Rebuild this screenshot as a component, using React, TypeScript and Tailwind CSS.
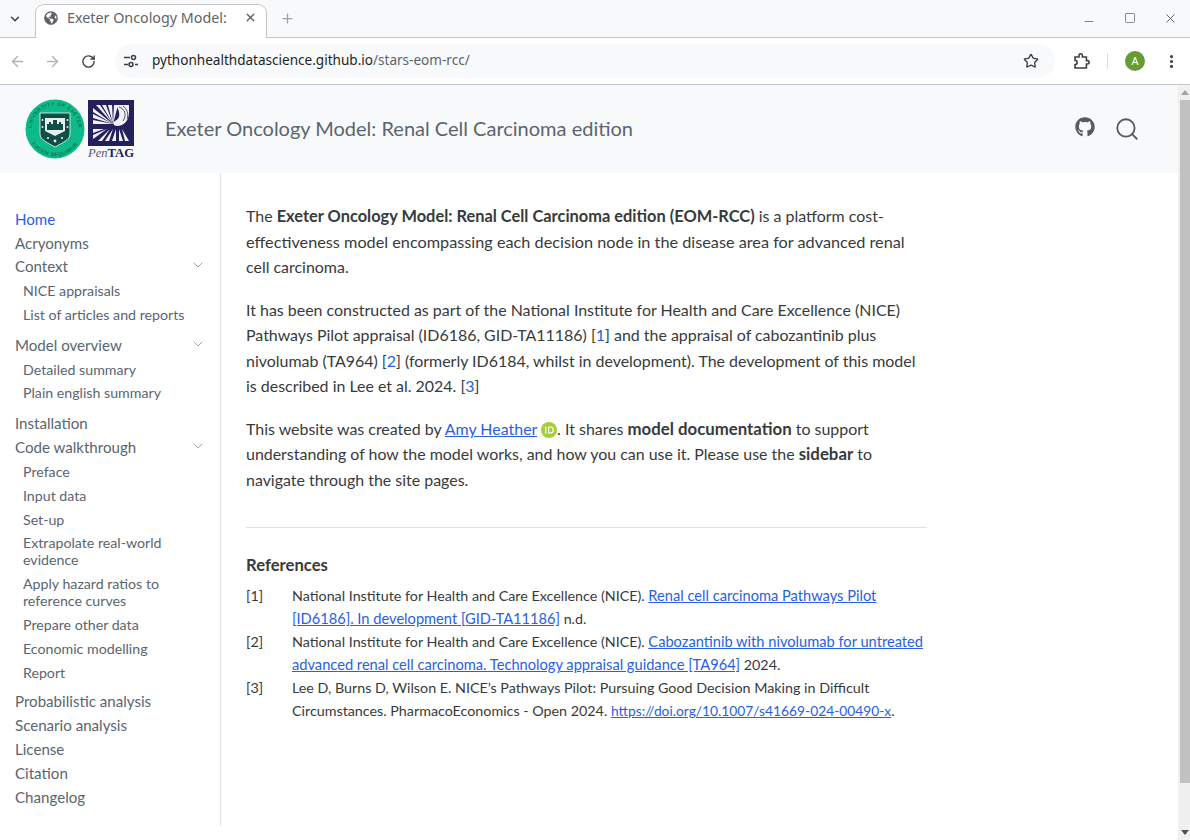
import { ArrowLeft, ArrowRight, ChevronDown, Minus, MoreVertical, Plus, RotateCw, Search, Square, Star, X } from 'lucide-react';
import { FaGithub, FaGlobeAmericas } from 'react-icons/fa';

const fanTargets = [
  [5, 8], [5, 14], [5, 20], [8, 5], [14, 5], [20, 5], [26, 5],
];
const rayTargets = [
  [5, 33], [5, 39], [10, 41], [17, 41], [24, 41], [31, 41], [37, 41],
];

function NavItem({ label, active, caret }: { label: string; active?: boolean; caret?: boolean }) {
  return (
    <div className={`flex h-[24px] items-center justify-between pr-[14px] text-[15.1px] ${active ? 'text-[#2761e3]' : 'text-[#5a6570]'}`}>
      <span className="mt-[2px]">{label}</span>
      {caret && <ChevronDown className="h-[16px] w-[16px] text-[#6c757d]" strokeWidth={1} />}
    </div>
  );
}

function SubItem({ lines }: { lines: string[] }) {
  return (
    <div className="py-[3.5px] pl-[8px] text-[14.2px] leading-[17px] text-[#5a6570]">
      {lines.map((l) => (
        <div key={l}>{l}</div>
      ))}
    </div>
  );
}

function Ref({ n, children }: { n: number; children: React.ReactNode }) {
  return (
    <div className="flex text-[14.3px] leading-[23px]">
      <div className="w-[46px] shrink-0">[{n}]</div>
      <div>{children}</div>
    </div>
  );
}

function BrowserChrome() {
  return (
    <div className="h-[85px] shrink-0 border-b border-[#c4c7c9] bg-[#f8f9fa] font-['Noto_Sans',sans-serif]">
      <div className="flex h-[38px] items-end border-b border-[#c4c7c9] bg-[#f8f9fa]">
        <div className="flex h-[36px] w-[30px] items-center justify-center">
          <ChevronDown className="h-[14px] w-[14px] text-[#3c4043]" strokeWidth={2.5} />
        </div>
        <div className="-mb-px ml-[5px] flex h-[34px] w-[232px] items-center rounded-t-[9px] border border-b-0 border-[#c4c7c9] bg-white pb-[8px] pl-[8px]">
          <FaGlobeAmericas className="h-[14px] w-[14px] text-[#5f6368]" />
          <span className="ml-[9px] w-[165px] overflow-hidden whitespace-nowrap text-[14.3px] text-[#5f6368]">Exeter Oncology Model:</span>
          <X className="ml-[12px] h-[13px] w-[13px] text-[#5f6368]" strokeWidth={2.5} />
        </div>
        <div className="flex h-[38px] w-[40px] items-center justify-center">
          <Plus className="h-[15px] w-[15px] text-[#9aa0a6]" strokeWidth={2} />
        </div>
        <div className="ml-auto flex h-[38px] items-center pr-[12px] text-[#5f6368]">
          <Minus className="mt-[6px] h-[13px] w-[14px]" strokeWidth={1.5} />
          <Square className="ml-[28px] h-[12px] w-[12px]" strokeWidth={1.5} />
          <X className="ml-[27px] h-[15px] w-[15px]" strokeWidth={1.5} />
        </div>
      </div>
      <div className="flex h-[46px] items-center bg-white">
        <div className="flex w-[115px] items-center pl-[9px] text-[#5f6368]">
          <ArrowLeft className="h-[17px] w-[17px] text-[#b0b3b6]" strokeWidth={2} />
          <ArrowRight className="ml-[18px] h-[17px] w-[17px] text-[#b0b3b6]" strokeWidth={2} />
          <RotateCw className="ml-[20px] h-[15px] w-[15px] text-[#3c4043]" strokeWidth={2.2} />
        </div>
        <div className="flex h-[34px] w-[940px] items-center rounded-full bg-[#f8f9fa]">
          <svg className="ml-[9px] h-[14px] w-[14px]" viewBox="0 0 14 14" fill="none" stroke="#3c4043" strokeWidth="1.5">
            <path d="M0 3.5h6M11 10.5h3M0 10.5h4" />
            <circle cx="9.5" cy="3.5" r="2" />
            <circle cx="7" cy="10.5" r="2" />
          </svg>
          <span className="mb-[2px] ml-[14px] text-[13.55px] text-[#1f1f1f]">
            pythonhealthdatascience.github.io<span className="text-[#5f6368]">/stars-eom-rcc/</span>
          </span>
          <Star className="ml-auto mr-[16px] h-[16px] w-[16px] text-[#3c4043]" strokeWidth={2} />
        </div>
        <svg className="ml-[18px] h-[18px] w-[18px]" viewBox="0 0 18 18" fill="none" stroke="#3c4043" strokeWidth="1.6">
          <path d="M2 5h4V3.5a1.7 1.7 0 0 1 3.4 0V5h4v3.6h1a1.7 1.7 0 0 1 0 3.4h-1v4H2v-3.4a2 2 0 0 0 0-4.2z" />
        </svg>
        <div className="ml-[16px] h-[16px] w-px bg-[#dadce0]" />
        <div className="ml-[17px] flex h-[20px] w-[20px] items-center justify-center rounded-full bg-[#669c35] text-[11px] text-white">A</div>
        <MoreVertical className="ml-[18px] h-[17px] w-[17px] text-[#3c4043]" strokeWidth={2.5} />
      </div>
    </div>
  );
}

function Logos() {
  return (
    <div className="flex items-start">
      <svg className="mt-[14px] h-[60px] w-[60px]" viewBox="0 0 60 60">
        <circle cx="30" cy="30" r="29.5" fill="#0cbb87" />
        <defs>
          <path id="ringTop" d="M10.7 43.5A23.5 23.5 0 1 1 49.3 43.5" />
          <path id="ringBottom" d="M5.5 41.5A27 27 0 0 0 54.5 41.5" />
        </defs>
        <text fill="#0f4f45" fontSize="5" fontFamily="Liberation Sans, sans-serif" letterSpacing="0.6" textAnchor="middle">
          <textPath href="#ringTop" startOffset="50%">UNIVERSITY OF EXETER</textPath>
        </text>
        <text fill="#0f4f45" fontSize="5" fontFamily="Liberation Sans, sans-serif" letterSpacing="0.6" textAnchor="middle">
          <textPath href="#ringBottom" startOffset="50%">LUCEM SEQUIMUR</textPath>
        </text>
        <path d="M15 14h30v21c0 6-8 9-15 13-7-4-15-7-15-13z" fill="#0f4f45" stroke="#dcebe6" strokeWidth="0.9" />
        <path d="M20 19h20v13l-10 5-10-5z" fill="#e7efec" />
        <path d="M22 31v-6h2v-2h2v2h2v-4h4v4h2v-2h2v2h2v6z" fill="#0f4f45" />
        <circle cx="17.5" cy="21" r="1" fill="#e7efec" />
        <circle cx="17.5" cy="28" r="1" fill="#e7efec" />
        <circle cx="42.5" cy="21" r="1" fill="#e7efec" />
        <circle cx="42.5" cy="28" r="1" fill="#e7efec" />
        <circle cx="30" cy="42" r="1.4" fill="#e7efec" />
        <circle cx="23" cy="39" r="1.1" fill="#e7efec" />
        <circle cx="37" cy="39" r="1.1" fill="#e7efec" />
      </svg>
      <div className="ml-[3px] mt-[15px] w-[46px]">
        <svg className="h-[46px] w-[46px]" viewBox="0 0 46 46">
          <rect width="46" height="46" fill="#24205c" />
          {fanTargets.map(([x, y], i) => (
            <path key={i} d={`M25 24L${x} ${y}L${x + (y === 5 ? 4 : 0)} ${y + (y === 5 ? 0 : 4)}z`} fill="#f2f2f6" />
          ))}
          <path d="M28 5h13v8c0 7-5 13-12 13-4 0-5-4-2-5 5-2 6-8 1-16z" fill="#f2f2f6" />
          <path d="M31 7c6 2 8 8 4 14M35 6c4 3 6 8 4 13" fill="none" stroke="#24205c" strokeWidth="0.8" />
          {rayTargets.map(([x, y], i) => (
            <path key={i} d={`M${16 + i * 3} 29L${x} ${y}L${x + (y === 41 ? 4 : 0)} ${y - (y === 41 ? 0 : 4)}z`} fill="#f2f2f6" />
          ))}
        </svg>
        <div className="whitespace-nowrap text-center font-['Liberation_Serif',serif] text-[12.6px] leading-[15px] text-[#24205c]">
          <span className="italic text-[#55527f]">Pen</span>
          <span className="font-bold">TAG</span>
        </div>
      </div>
    </div>
  );
}

export default function App() {
  return (
    <div className="flex h-[840px] w-[1190px] flex-col overflow-hidden bg-white font-['Lato',sans-serif]">
      <BrowserChrome />
      <div className="flex min-h-0 flex-1">
        <div className="flex min-w-0 flex-1 flex-col">
          {/* --- SITE HEADER --- */}
          <div className="flex h-[88px] shrink-0 items-start bg-[#f8f9fa] pl-[25px]">
            <Logos />
            <div className="ml-[31px] mt-[29px] text-[20px] leading-[28px] text-[#5a6570]">Exeter Oncology Model: Renal Cell Carcinoma edition</div>
            <div className="ml-auto mr-[38px] mt-[29px] flex items-start gap-[19px] text-[#545b62]">
              <FaGithub className="mt-[3px] h-[20px] w-[20px]" />
              <Search className="mt-[2px] h-[26px] w-[26px]" strokeWidth={1.7} />
            </div>
          </div>

          <div className="flex min-h-0 flex-1">
            {/* --- SIDEBAR --- */}
            <div className="mb-[14px] w-[221px] shrink-0 border-r border-[#dee2e6] pl-[15px] pt-[33px]">
              <NavItem label="Home" active />
              <NavItem label="Acryonyms" />
              <div className="-mt-px">
                <NavItem label="Context" caret />
              </div>
              <div className="mb-[6px] pt-[1px]">
                <SubItem lines={['NICE appraisals']} />
                <SubItem lines={['List of articles and reports']} />
              </div>
              <div className="mt-[1px]">
                <NavItem label="Model overview" caret />
              </div>
              <div className="mb-[6px] pt-[1px]">
                <SubItem lines={['Detailed summary']} />
                <div className="-mt-px">
                  <SubItem lines={['Plain english summary']} />
                </div>
              </div>
              <NavItem label="Installation" />
              <NavItem label="Code walkthrough" caret />
              <div className="mb-[4px] pt-[1px]">
                <SubItem lines={['Preface']} />
                <SubItem lines={['Input data']} />
                <SubItem lines={['Set-up']} />
                <div className="-mt-px">
                  <SubItem lines={['Extrapolate real-world', 'evidence']} />
                </div>
                <SubItem lines={['Apply hazard ratios to', 'reference curves']} />
                <SubItem lines={['Prepare other data']} />
                <SubItem lines={['Economic modelling']} />
                <SubItem lines={['Report']} />
              </div>
              <NavItem label="Probabilistic analysis" />
              <NavItem label="Scenario analysis" />
              <NavItem label="License" />
              <NavItem label="Citation" />
              <NavItem label="Changelog" />
            </div>

            {/* --- MAIN CONTENT --- */}
            <div className="w-[706px] pl-[25px] pt-[30px] text-[15.95px] leading-[25.5px] text-[#373a3c]">
              <p>
                The <b className="text-[16.42px]">Exeter Oncology Model: Renal Cell Carcinoma edition (EOM-RCC)</b> is a platform cost-
                <br />
                <span className="text-[16.25px]">effectiveness model encompassing each decision node in the disease area for advanced renal</span>
                <br />
                cell carcinoma.
              </p>
              <p className="mt-[17px]">
                It has been constructed as part of the National Institute for Health and Care Excellence (NICE) Pathways Pilot appraisal (ID6186, GID-TA11186) [<span className="text-[#2761e3]">1</span>] and the appraisal of cabozantinib plus nivolumab (TA964) [<span className="text-[#2761e3]">2</span>] (formerly ID6184, whilst in development). The development of this model is described in Lee et al. 2024. [<span className="text-[#2761e3]">3</span>]
              </p>
              <p className="mt-[17px]">
                This website was created by <span className="text-[#2761e3] underline">Amy Heather</span>{' '}
                <svg className="inline h-[16px] w-[16px] align-[-3px]" viewBox="0 0 16 16">
                  <circle cx="8" cy="8" r="8" fill="#a6ce39" />
                  <rect x="4" y="4.5" width="1.3" height="7" fill="#fff" />
                  <path d="M7 4.5h2.4a3.5 3.5 0 0 1 0 7H7zm1.2 1.1v4.8h1.2a2.4 2.4 0 0 0 0-4.8z" fill="#fff" />
                </svg>
                . It shares <b className="text-[16.8px]">model documentation</b> to support understanding of how the model works, and how you can use it. Please use the <b className="text-[16.8px]">sidebar</b> to navigate through the site pages.
              </p>
              <div className="mt-[35px] border-t border-[#dee2e6] pt-[24px]">
                <div className="mb-[6px] text-[16.65px] font-bold leading-[26px]">References</div>
                <Ref n={1}>
                  National Institute for Health and Care Excellence (NICE). <span className="text-[14.65px] text-[#2761e3] underline">Renal cell carcinoma Pathways Pilot [ID6186]. In development [GID-TA11186]</span> n.d.
                </Ref>
                <Ref n={2}>
                  National Institute for Health and Care Excellence (NICE). <span className="text-[14.65px] text-[#2761e3] underline">Cabozantinib with nivolumab for untreated advanced renal cell carcinoma. Technology appraisal guidance [TA964]</span> 2024.
                </Ref>
                <Ref n={3}>
                  Lee D, Burns D, Wilson E. NICE’s Pathways Pilot: Pursuing Good Decision Making in Difficult Circumstances. PharmacoEconomics - Open 2024. <span className="text-[13.8px] text-[#2761e3] underline">https://doi.org/10.1007/s41669-024-00490-x</span>.
                </Ref>
              </div>
            </div>
          </div>
        </div>

        {/* --- SCROLLBAR --- */}
        <div className="flex w-[12px] shrink-0 flex-col bg-[#f0f0f0] pl-[2px]">
          <div className="flex h-[15px] items-center justify-center">
            <div className="h-0 w-0 border-x-[4px] border-b-[5px] border-x-transparent border-b-[#a3a3a3]" />
          </div>
          <div className="h-[683px] bg-[#c1c1c1]" />
          <div className="mt-auto flex h-[15px] items-center justify-center">
            <div className="h-0 w-0 border-x-[4px] border-t-[5px] border-x-transparent border-t-[#505050]" />
          </div>
        </div>
      </div>
    </div>
  );
}
